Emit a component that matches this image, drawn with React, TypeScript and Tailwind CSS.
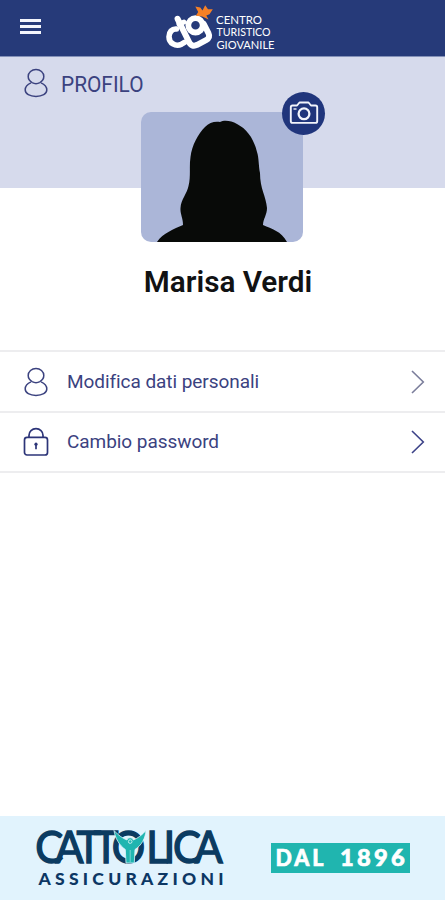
import React from "react";

type FitProps = { x: number; y: number; w: number; size: number; weight?: number; family?: string; spacing?: number; children: string };

// A word stretched to an exact width, used by the wordmarks.
function Fit({ x, y, w, size, weight = 400, family = "Lato, sans-serif", spacing = 0, children }: FitProps) {
  return (
    <text x={x} y={y} fontSize={size} fontWeight={weight} fontFamily={family} letterSpacing={spacing} textLength={w} lengthAdjust="spacingAndGlyphs">
      {children}
    </text>
  );
}

function Person() {
  return (
    <svg className="h-[30px] w-6 shrink-0" viewBox="0 0 24 30" fill="none" stroke="#3b427f" strokeWidth="1.5">
      <path d="M8.1 14.6C5.4 13 4.2 10.8 4.2 8.5C4.2 4.5 7.7 1.5 12 1.5S19.8 4.5 19.8 8.5C19.8 10.8 18.6 13 15.9 14.6C13.5 15.9 10.5 15.9 8.1 14.6Z" />
      <path d="M7 14.9C3.3 16.3 1.2 19 1.2 22.1C1.2 26 5.8 28.4 12 28.4S22.8 26 22.8 22.1C22.8 19 20.7 16.3 17 14.9" />
    </svg>
  );
}

function Lock() {
  return (
    <svg className="h-[30px] w-[26px] shrink-0" viewBox="0 0 26 30" fill="none" stroke="#2c3478" strokeWidth="1.7">
      <rect x="1.5" y="10.4" width="23" height="17.6" rx="2.5" />
      <path d="M6 10V8.3C6 4.5 9 1.7 13 1.7S20 4.5 20 8.3V10" />
      <circle cx="13" cy="17.2" r="1.6" fill="#2c3478" stroke="none" />
      <path d="M13 17V22.3" />
    </svg>
  );
}

function Logo() {
  return (
    <svg className="h-[56px] w-[120px] overflow-visible" viewBox="160 0 120 56" fill="none">
      <g stroke="#fff" strokeWidth="6" strokeLinecap="round" strokeLinejoin="round">
        <path d="M176.5 29C172 28.5 169 32.3 169 36.7C169 43 175.5 47.2 181.5 44.2L184.5 42.4" strokeWidth="5.6" />
        <path d="M177.6 18.8L188.8 41.5C190.3 45.5 193.5 46.6 197.2 44.8L206 40.2C209.4 38.2 209.8 36 208.3 32.8L203.8 24" />
        <path d="M179 24.3L184 22" strokeWidth="5" />
        <circle cx="195.5" cy="25.3" r="7.2" strokeWidth="5.8" />
      </g>
      <path d="M195.3 6.5L200.3 7.6L202.5 10.6L205.2 5.2L208 9.3L212.8 9.3L209.5 14.3L206.3 15.5L208.5 19.6L202.3 16.4L195.8 15.8L198.2 12Z" fill="#f58026" />
      <g fill="#fff">
        <Fit x={216} y={24} w={46} size={12}>CENTRO</Fit>
        <Fit x={216.5} y={36.3} w={54} size={12}>TURISTICO</Fit>
        <Fit x={216.5} y={48.6} w={58} size={12}>GIOVANILE</Fit>
      </g>
    </svg>
  );
}

function Chevron({ color }: { color: string }) {
  return (
    <svg className="h-[24px] w-[14px]" viewBox="0 0 14 24" fill="none" stroke={color} strokeWidth="1.6">
      <path d="M1 1L12.3 12L1 23" />
    </svg>
  );
}

function Row({ icon, label, color }: { icon: React.ReactNode; label: string; color: string }) {
  return (
    <li className="flex h-[60.5px] items-center border-b-2 border-[#ededef] pr-5 pt-px">
      <span className="ml-[23px] flex w-[26px] justify-center">{icon}</span>
      <span className="ml-[18px] flex-1 text-[19px] tracking-[-0.06px] text-[#3b427f]">{label}</span>
      <Chevron color={color} />
    </li>
  );
}

function Photo() {
  return (
    <div className="relative h-[130px] w-[162px]">
      <svg className="h-full w-full rounded-[10px] bg-[#abb6d8]" viewBox="0 0 162 130">
        <path
          fill="#080a08"
          d="M79 10C83 8 90 8.5 96 12C106 17 113 27 116 40C118 46 117.5 54 119 61C119 77 125 84 126 96C126 103 122 107 122 113C131 117 140 119 146 130H16C22 121 33 117 42 113C42 106 39 102 39.5 96C40 87 46 82 47.5 74C50 64 48 54 49.5 45C51 33 57 22 64 15C68 10.5 74 9 79 10Z"
        />
      </svg>
      <div className="absolute -right-[22px] -top-[20px] flex h-[43px] w-[43px] items-center justify-center rounded-full bg-[#20357c]">
        <svg className="mb-[2px] h-6 w-[30px]" viewBox="0 0 30 24" fill="none" stroke="#f2f4fb" strokeWidth="1.9" strokeLinejoin="round">
          <path d="M3.5 4.5H8L10.5 1.5H19.5L22 4.5H26.5Q28.2 4.5 28.2 6.2V20.2Q28.2 21.9 26.5 21.9H3.5Q1.8 21.9 1.8 20.2V6.2Q1.8 4.5 3.5 4.5Z" />
          <circle cx="15" cy="12.8" r="5.4" strokeWidth="2.3" />
          <path d="M4.5 8H7.5" strokeWidth="1.4" />
        </svg>
      </div>
    </div>
  );
}

function Cattolica() {
  return (
    <svg className="h-[84px] w-[200px]" viewBox="30 816 200 84">
      <text
        transform="scale(.95 1)"
        x="37.2 58.2 80.6 98.6 117.7 154 172.2 182.2 204.8"
        y={863}
        fontSize={44}
        fontWeight={400}
        fontFamily="Lato, sans-serif"
        fill="#0b3b61"
        stroke="#0b3b61"
        strokeWidth={1.4}
      >
        CATTOLICA
      </text>
      <path
        d="M114 830.5C118.5 835.5 123 838.5 127 840C127.5 837 132.8 837 133.2 840C137.5 838.5 142 835 146 830.5C145.5 838 141.5 845.5 135 849.5L134.3 863H126L125.3 849.5C119.5 845.5 115 838 114 830.5Z"
        fill="#20b5b0"
        stroke="#e1f3fd"
        strokeWidth=".8"
      />
      <circle cx="130.2" cy="841.6" r="1.8" fill="none" stroke="#c3eef0" strokeWidth="1" />
      <path d="M130.2 850V862" fill="none" stroke="#9fe0e2" strokeWidth=".7" />
      <text x={38.5} y={885.3} fontSize={17.5} fontWeight={900} fontFamily="Lato, sans-serif" textLength={185} lengthAdjust="spacing" fill="#0c3764">
        ASSICURAZIONI
      </text>
    </svg>
  );
}

export default function App() {
  return (
    <div className="flex h-[900px] w-[445px] flex-col overflow-hidden bg-white font-['Roboto',sans-serif]">
      <header className="flex h-[57px] shrink-0 items-start border-b border-[#8390b8] bg-[#263a79]">
        <div className="ml-5 mt-[19px] flex w-[21px] flex-col gap-[3px]">
          <span className="h-[3px] bg-[#f3f5fc]" />
          <span className="h-[3px] bg-[#f3f5fc]" />
          <span className="h-[3px] bg-[#f3f5fc]" />
        </div>
        <div className="ml-[119px]">
          <Logo />
        </div>
      </header>

      <section className="flex h-[131px] shrink-0 flex-col bg-[#d6daec]">
        <h1 className="ml-6 mt-[10px] flex h-[32px] items-center text-[#3b427f]">
          <Person />
          <svg className="ml-[14px] h-8 w-[90px] overflow-visible" viewBox="62 67 90 32" fill="currentColor">
            <Fit x={61} y={91.7} w={82.5} size={22} family="Roboto, sans-serif">PROFILO</Fit>
          </svg>
        </h1>
        <div className="ml-[141px] mt-[13px]">
          <Photo />
        </div>
      </section>

      <h2 className="mt-[74px] h-10 pl-[11px] text-center text-[29.7px] font-semibold leading-10 text-[#111213]">Marisa Verdi</h2>

      <ul className="mt-12 border-t-2 border-[#ededef]">
        <Row icon={<Person />} color="#7b7e9b" label="Modifica dati personali" />
        <Row icon={<Lock />} color="#3c4288" label="Cambio password" />
      </ul>

      <footer className="mt-auto flex h-[84px] bg-[#e1f3fd] pl-[30px]">
        <Cattolica />
        <div className="ml-[41px] mt-[27px] h-[30px] w-[139px] bg-[#20b5af] text-white">
          <svg className="h-full w-full" viewBox="0 0 139 30" fill="currentColor" stroke="currentColor" strokeWidth=".6">
            <Fit x={4.5} y={23} w={51} size={22} weight={900} spacing={3}>DAL</Fit>
            <Fit x={69} y={23} w={68} size={22} weight={900} spacing={3}>1896</Fit>
          </svg>
        </div>
      </footer>
    </div>
  );
}
